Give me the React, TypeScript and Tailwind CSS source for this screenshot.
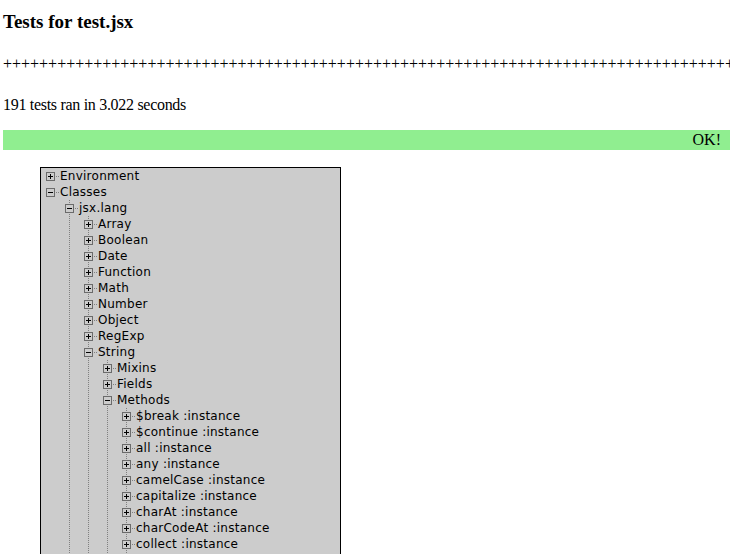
type Row = { label: string; level: number; open: boolean; next: boolean }

const row = (label: string, level: number, open = false, next = true): Row => ({ label, level, open, next })

const ROWS: Row[] = [
  row('Environment', 0),
  row('Classes', 0, true, false),
  row('jsx.lang', 1, true),
  row('Array', 2),
  row('Boolean', 2),
  row('Date', 2),
  row('Function', 2),
  row('Math', 2),
  row('Number', 2),
  row('Object', 2),
  row('RegExp', 2),
  row('String', 2, true),
  row('Mixins', 3),
  row('Fields', 3),
  row('Methods', 3, true),
  row('$break :instance', 4),
  row('$continue :instance', 4),
  row('all :instance', 4),
  row('any :instance', 4),
  row('camelCase :instance', 4),
  row('capitalize :instance', 4),
  row('charAt :instance', 4),
  row('charCodeAt :instance', 4),
  row('collect :instance', 4),
  row('compact :instance', 4),
  row('concat :instance', 4),
]

const DOT = '#808080'

function Guide({ line }: { line: boolean }) {
  return (
    <svg width="19" height="16" className="shrink-0 block">
      {line && <line x1="9.5" y1="0" x2="9.5" y2="16" stroke={DOT} strokeDasharray="1 1" />}
    </svg>
  )
}

function Toggle({ level, open, next }: { level: number; open: boolean; next: boolean }) {
  return (
    <svg width="19" height="16" className="shrink-0 block">
      {level > 0 && <line x1="9.5" y1="0" x2="9.5" y2="4" stroke={DOT} strokeDasharray="1 1" />}
      {level > 0 && next && <line x1="9.5" y1="14" x2="9.5" y2="16" stroke={DOT} strokeDasharray="1 1" />}
      <rect x="5.5" y="4.5" width="8" height="8" fill="none" stroke="#6b6b6b" />
      <line x1="7" y1="8.5" x2="12" y2="8.5" stroke="#000" />
      {!open && <line x1="9.5" y1="6" x2="9.5" y2="11" stroke="#000" />}
      <line x1="15" y1="8.5" x2="19" y2="8.5" stroke={DOT} strokeDasharray="1 1" />
    </svg>
  )
}

function Tree() {
  const nextAt: boolean[] = []
  return (
    <div className="ml-[37px] mt-[17px] w-[301px] border border-black bg-[#cccccc] pb-4">
      {ROWS.map((r, i) => {
        const guides = Array.from({ length: r.level }, (_, k) => k > 0 && nextAt[k])
        nextAt[r.level] = r.next
        return (
          <div key={i} className="flex h-4 items-start">
            {guides.map((g, k) => (
              <Guide key={k} line={g} />
            ))}
            <Toggle level={r.level} open={r.open} next={r.next} />
            <span className="whitespace-nowrap text-[12px] leading-[16px] tracking-[0.25px] text-black [font-family:'DejaVu_Sans',sans-serif]">
              {r.label}
            </span>
          </div>
        )
      })}
    </div>
  )
}

export default function App() {
  return (
    <div className="h-[554px] w-[730px] overflow-hidden bg-white pl-[3px] text-black [font-family:'Liberation_Serif',serif]">
      <h3 className="pt-[11px] text-[19px] font-bold leading-[21px] [font-family:'Liberation_Serif',serif]">
        Tests for test.jsx
      </h3>
      <div className="mt-[23px] whitespace-nowrap text-[16px] leading-[18px]">{'+'.repeat(191)}</div>
      <p className="mt-[23px] text-[16px] leading-[18px] tracking-[-0.3px]">191 tests ran in 3.022 seconds</p>
      <div className="mt-[16px] h-[20px] bg-[#90ee90] pr-[9px] text-right text-[16px] leading-[20px]">OK!</div>
      <Tree />
    </div>
  )
}
